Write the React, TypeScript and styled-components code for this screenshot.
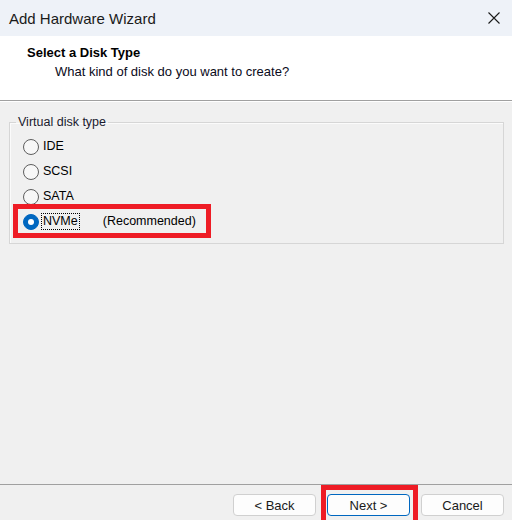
import React from "react";
import styled, { createGlobalStyle } from "styled-components";

const Global = createGlobalStyle`
  html, body { margin: 0; padding: 0; background: #f0f0f0; }
  * { box-sizing: border-box; }
`;

const Window = styled.div`
  width: 512px;
  height: 520px;
  display: flex;
  flex-direction: column;
  overflow: hidden;
  background: #f0f0f0;
  font-family: "Liberation Sans", Arial, sans-serif;
  color: #000;
`;

const TitleBar = styled.div`
  height: 36px;
  flex: none;
  display: flex;
  align-items: center;
  justify-content: space-between;
  padding: 0 12px 0 9px;
  background: #eef2f8;
  font-size: 15px;
  color: #1a1a1a;
`;

const CloseIcon = styled.svg`
  width: 12px;
  height: 12px;
  display: block;
`;

const Header = styled.div`
  height: 65px;
  flex: none;
  background: #ffffff;
  border-bottom: 1px solid #a0a0a0;
  box-shadow: 0 1px 0 #ffffff;
  padding: 9px 0 0 27px;
  display: flex;
  flex-direction: column;
  font-size: 13px;
`;

const HeaderTitle = styled.div`
  font-weight: bold;
  line-height: 16px;
  height: 16px;
`;

const HeaderSub = styled.div`
  margin: 3px 0 0 28px;
  line-height: 16px;
  color: #0a0a20;
`;

const Content = styled.div`
  flex: 1;
  display: flex;
  flex-direction: column;
`;

const GroupBox = styled.fieldset`
  margin: 14px 8px 0 9px;
  padding: 5px 0 9px 13px;
  border: 1px solid #d6d6d6;
  box-shadow: inset 1px 1px 0 #fbfbfb;
  min-width: 0;
  display: flex;
  flex-direction: column;
`;

const Legend = styled.legend`
  margin-left: -7px;
  padding: 0 2px;
  font-size: 12.5px;
  line-height: 14px;
  color: #1a1a2e;
`;

const RadioRow = styled.div`
  position: relative;
  height: 25px;
  display: flex;
  align-items: center;
  font-size: 12.5px;
`;

const RadioCircle = styled.span<{ $checked?: boolean }>`
  width: 16px;
  height: 16px;
  border-radius: 50%;
  flex: none;
  display: flex;
  align-items: center;
  justify-content: center;
  background: ${(p) => (p.$checked ? "#0067c0" : "#f7f7f7")};
  border: 1px solid ${(p) => (p.$checked ? "#0067c0" : "#5e5e5e")};
  margin-right: 3px;
  &::after {
    content: "";
    display: ${(p) => (p.$checked ? "block" : "none")};
    width: 6px;
    height: 6px;
    border-radius: 50%;
    background: #ffffff;
  }
`;

const Label = styled.span<{ $focused?: boolean }>`
  line-height: 15px;
  padding: 0 1px;
  outline: ${(p) => (p.$focused ? "1px dotted #000" : "none")};
`;

const Note = styled.span`
  margin-left: 24px;
  line-height: 15px;
`;

const Highlight = styled.span<{ $w: number; $h: number; $l: number; $t: number }>`
  position: absolute;
  left: ${(p) => p.$l}px;
  top: ${(p) => p.$t}px;
  width: ${(p) => p.$w}px;
  height: ${(p) => p.$h}px;
  border: 5px solid #ee1c25;
  pointer-events: none;
`;

const Footer = styled.div`
  height: 36px;
  flex: none;
  border-top: 1px solid #a0a0a0;
  display: flex;
  justify-content: flex-end;
  align-items: flex-start;
  gap: 11px;
  padding: 9px 8px 0 0;
`;

const Button = styled.button<{ $primary?: boolean }>`
  position: relative;
  width: 83px;
  height: 22px;
  border-radius: 4px;
  border: 1px solid ${(p) => (p.$primary ? "#0067c0" : "#d0d0d0")};
  background: #fdfdfd;
  font-family: "Liberation Sans", Arial, sans-serif;
  font-size: 13px;
  color: #1a1a1a;
  padding: 0;
`;

const radios = ["IDE", "SCSI", "SATA"];

export default function App() {
  return (
    <>
      <Global />
      <Window>
        <TitleBar>
          <span>Add Hardware Wizard</span>
          <CloseIcon viewBox="0 0 12 12">
            <path d="M0.5 0.5 L11.5 11.5 M11.5 0.5 L0.5 11.5" stroke="#1a1a1a" strokeWidth="1.1" />
          </CloseIcon>
        </TitleBar>
        <Header>
          <HeaderTitle>Select a Disk Type</HeaderTitle>
          <HeaderSub>What kind of disk do you want to create?</HeaderSub>
        </Header>
        <Content>
          <GroupBox>
            <Legend>Virtual disk type</Legend>
            {radios.map((r) => (
              <RadioRow key={r}>
                <RadioCircle />
                <Label>{r}</Label>
              </RadioRow>
            ))}
            <RadioRow>
              <RadioCircle $checked />
              <Label $focused>NVMe</Label>
              <Note>(Recommended)</Note>
              <Highlight $l={-10} $t={-5} $w={198} $h={34} />
            </RadioRow>
          </GroupBox>
        </Content>
        <Footer>
          <Button>&lt; Back</Button>
          <Button $primary>
            Next &gt;
            <Highlight $l={-7} $t={-10} $w={97} $h={42} />
          </Button>
          <Button>Cancel</Button>
        </Footer>
      </Window>
    </>
  );
}
